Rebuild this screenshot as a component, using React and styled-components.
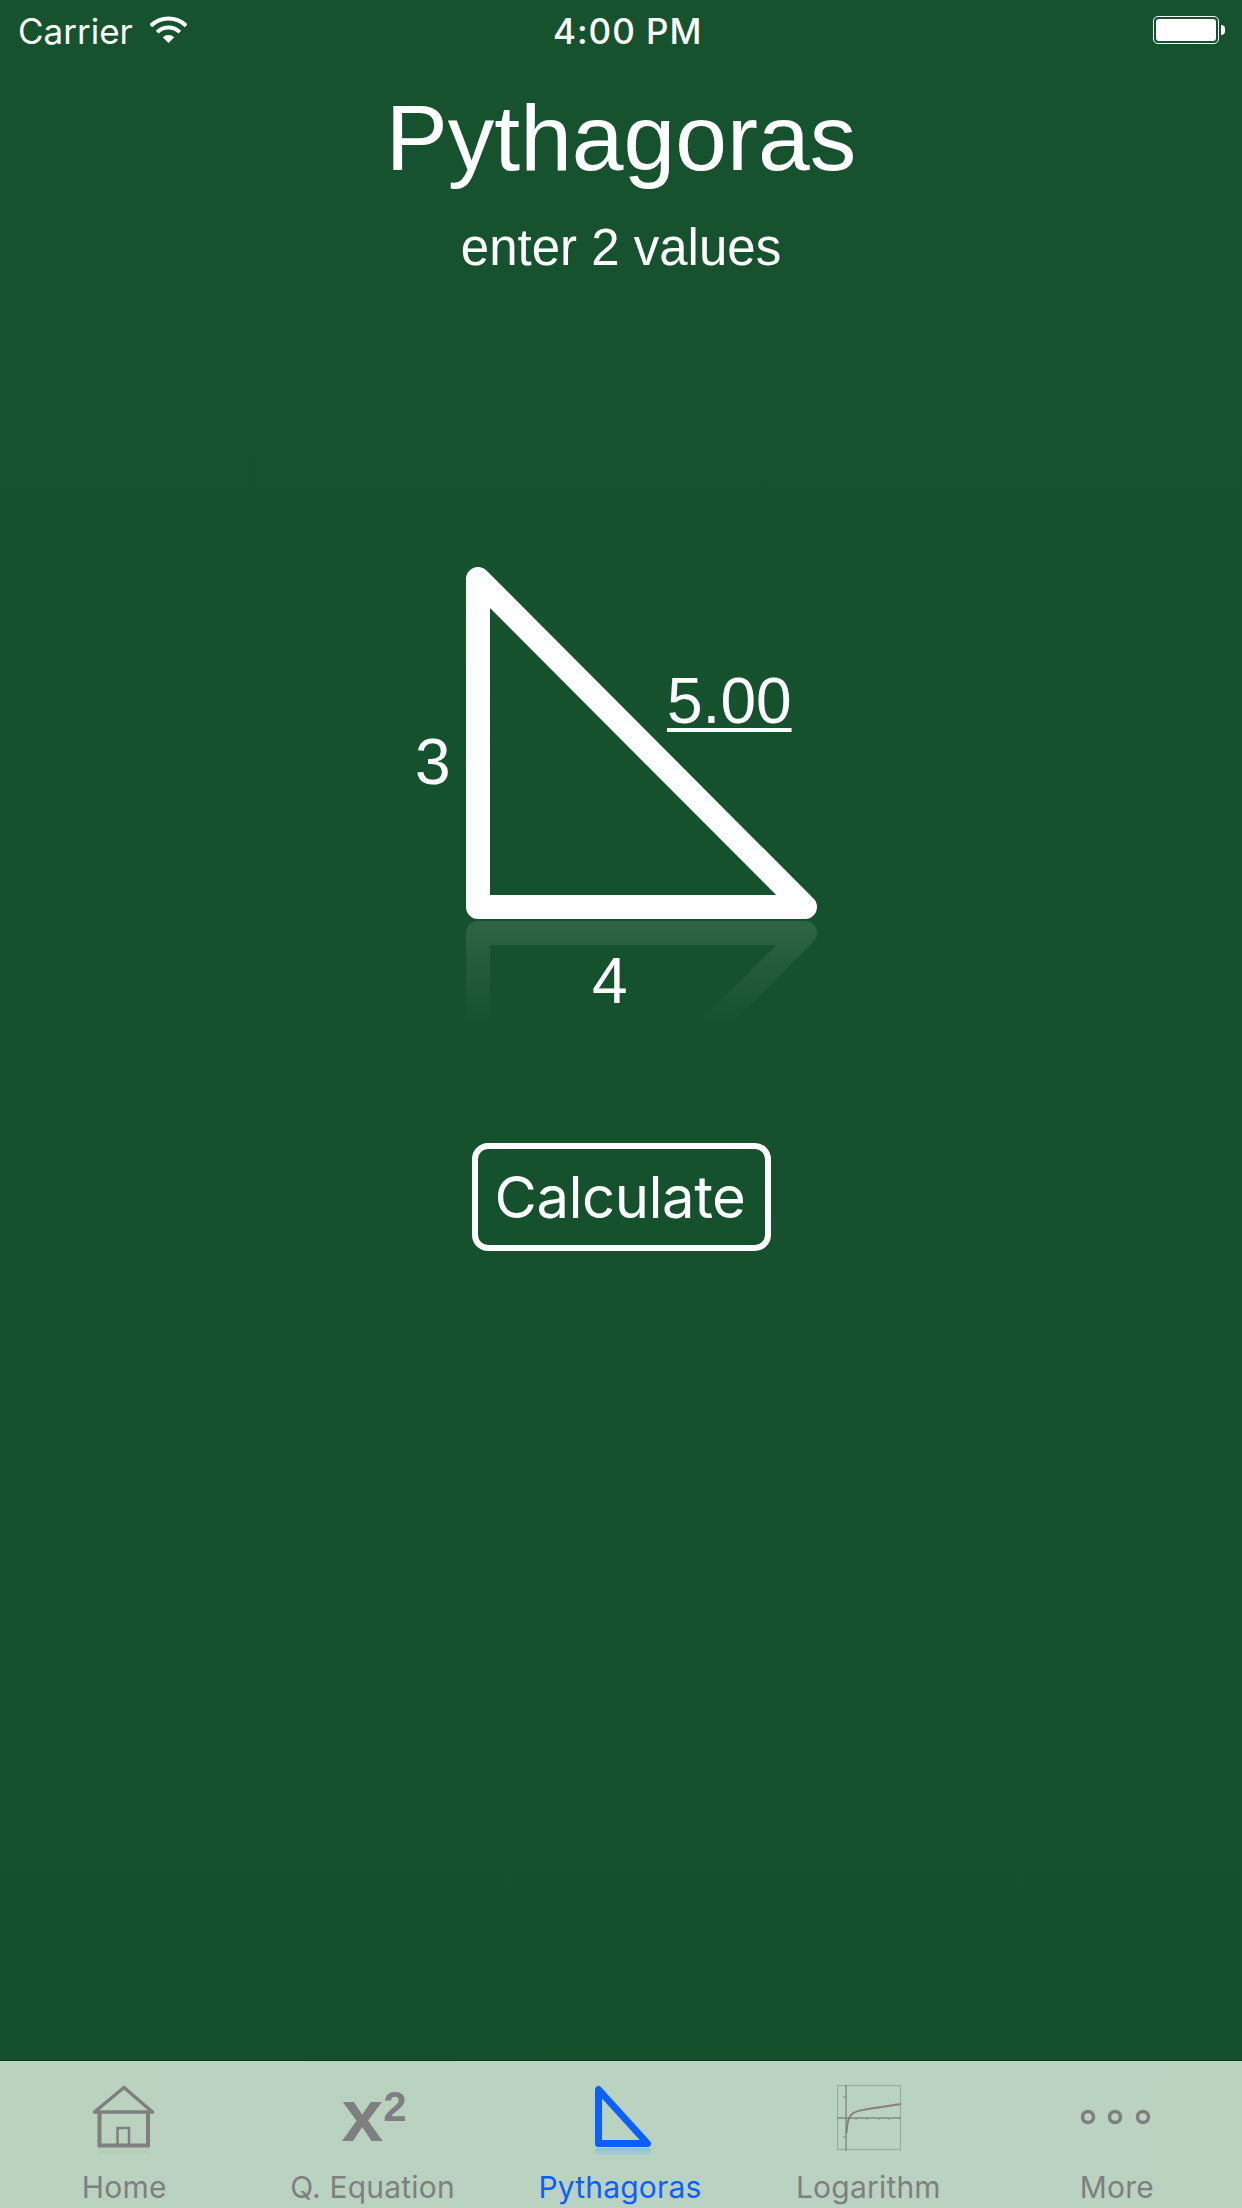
import React from 'react'
import styled, { createGlobalStyle } from 'styled-components'

const GlobalStyle = createGlobalStyle`
	html, body {
		margin: 0;
		padding: 0;
		background: #16512e;
	}
	* {
		box-sizing: border-box;
	}
`

const Page = styled.div`
	display: flex;
	flex-direction: column;
	width: 1242px;
	height: 2208px;
	overflow: hidden;
	background: linear-gradient(180deg, #16522e 0%, #14502c 100%);
	color: #fff;
	font-family: 'Liberation Sans', Arial, sans-serif;
`

const StatusBar = styled.div`
	display: grid;
	grid-template-columns: 535px auto 1fr;
	align-items: center;
	height: 60px;
	padding: 2px 17px 0 18px;
	font-family: Inter, 'Noto Sans', sans-serif;
	font-size: 35px;
	line-height: 58px;
`
const Carrier = styled.div`
	display: flex;
	align-items: center;
	gap: 17px;
	svg {
		margin-top: -3px;
	}
`
const Clock = styled.div`
	font-weight: 500;
	letter-spacing: 1px;
`
const Battery = styled.div`
	justify-self: end;
	display: flex;
	align-items: center;
	gap: 2px;
	margin-top: -2px;
`
const BatteryBody = styled.div`
	width: 66px;
	height: 28px;
	padding: 2px;
	border: 1px solid #fff;
	border-radius: 5px;
	&::after {
		content: '';
		display: block;
		height: 100%;
		background: #fff;
		border-radius: 3px;
	}
`
const BatteryCap = styled.div`
	width: 4px;
	height: 10px;
	background: #fff;
	border-radius: 0 5px 5px 0;
`

const Main = styled.main`
	flex: 1;
	display: flex;
	flex-direction: column;
	align-items: center;
`
const Title = styled.h1`
	margin: 32px 0 0;
	font-size: 93px;
	font-weight: 400;
	line-height: 93px;
`
const Subtitle = styled.div`
	margin-top: 37px;
	font-size: 51px;
	line-height: 51px;
`
const Figure = styled.div`
	position: relative;
	width: 392px;
	height: 456px;
	margin-top: 294px;
	svg {
		display: block;
	}
`
const SideValue = styled.div`
	position: absolute;
	left: ${(p) => p.$left}px;
	top: ${(p) => p.$top}px;
	font-size: 64px;
	line-height: 64px;
	text-decoration: ${(p) => (p.$underline ? 'underline' : 'none')};
	text-decoration-thickness: 4px;
	text-underline-offset: 5px;
`
const CalculateButton = styled.button`
	width: 299px;
	height: 108px;
	margin-top: 120px;
	padding: 0 2px 0 0;
	background: transparent;
	border: 6px solid #fff;
	border-radius: 16px;
	color: #fff;
	font-family: Inter, 'Noto Sans', sans-serif;
	font-size: 58px;
	font-weight: 400;
	line-height: 92px;
	letter-spacing: -0.5px;
`

const TabBar = styled.nav`
	display: grid;
	grid-template-columns: repeat(5, 1fr);
	height: 148px;
	padding-top: 24px;
	border-top: 1px solid #0e3a20;
	background: linear-gradient(100deg, #b9d3bf 0%, #bad2c1 60%, #bad3bf 100%);
`
const Tab = styled.div`
	display: flex;
	flex-direction: column;
	align-items: center;
	color: ${(p) => (p.$active ? '#0a60ff' : '#7f7f7f')};
`
const TabIcon = styled.div`
	display: flex;
	justify-content: center;
	height: 70px;
	margin-left: ${(p) => p.$shift || 0}px;
	svg {
		display: block;
	}
`
const TabLabel = styled.div`
	margin-top: 17px;
	margin-left: ${(p) => p.$shift || 0}px;
	font-family: Inter, 'Noto Sans', sans-serif;
	font-size: 30px;
	line-height: 30px;
	letter-spacing: 0.2px;
	white-space: nowrap;
`
const PowerBase = styled.span`
	margin-top: -7px;
	font-family: 'Liberation Sans', Arial, sans-serif;
	font-size: 75px;
	font-weight: 700;
	line-height: 75px;
`
const PowerExp = styled.span`
	margin-top: 1px;
	font-family: 'Liberation Sans', Arial, sans-serif;
	font-size: 42px;
	font-weight: 700;
	line-height: 42px;
`

const WifiIcon = () => (
	<svg width="37" height="27" viewBox="0 0 37 27" fill="none" stroke="#fff" strokeWidth="4">
		<path d="M0.8 9.8 A25 25 0 0 1 36.2 9.8" />
		<path d="M7.2 16.2 A16 16 0 0 1 29.8 16.2" />
		<path d="M12.8 21.3 A8 8 0 0 1 24.2 21.3 L18.5 27 Z" fill="#fff" stroke="none" />
	</svg>
)

const TriangleFigure = () => (
	<svg width="392" height="456" viewBox="0 0 392 456" fill="none">
		<defs>
			<linearGradient id="fade" x1="0" y1="353" x2="0" y2="456" gradientUnits="userSpaceOnUse">
				<stop offset="0" stopColor="#fff" stopOpacity="0.11" />
				<stop offset="1" stopColor="#fff" stopOpacity="0" />
			</linearGradient>
			<clipPath id="below">
				<rect x="0" y="353" width="392" height="103" />
			</clipPath>
		</defs>
		<path
			d="M53 12 L53 340 L380 340 Z"
			stroke="#fff"
			strokeWidth="24"
			strokeLinejoin="round"
		/>
		<g clipPath="url(#below)">
			<path
				d="M53 694 L53 366 L380 366 Z"
				stroke="url(#fade)"
				strokeWidth="24"
				strokeLinejoin="round"
			/>
		</g>
	</svg>
)

const HomeIcon = () => (
	<svg width="61" height="70" viewBox="0 0 61 70" fill="none" stroke="currentColor">
		<path d="M1.5 27 L31 2.5 L59.5 27 Z" strokeWidth="3.5" strokeLinejoin="round" />
		<path d="M6.5 27 V60.5 H55 V27" strokeWidth="4" />
		<path d="M24.5 60 V43 H36 V60" strokeWidth="2.5" />
		<rect x="5" y="63" width="52" height="6" fill="currentColor" stroke="none" opacity="0.06" />
	</svg>
)

const PowerIcon = () => (
	<>
		<PowerBase>x</PowerBase>
		<PowerExp>2</PowerExp>
	</>
)

const TriangleIcon = () => (
	<svg width="56" height="70" viewBox="0 0 56 70" fill="none">
		<defs>
			<linearGradient id="iconFade" x1="0" y1="0" x2="0" y2="1">
				<stop offset="0" stopColor="#8fc0d4" />
				<stop offset="1" stopColor="#a9cfd0" />
			</linearGradient>
		</defs>
		<path d="M3.5 4.5 V58.5 H52.5 Z" stroke="currentColor" strokeWidth="7" strokeLinejoin="round" />
		<rect x="0" y="63" width="56" height="7" rx="3" fill="url(#iconFade)" />
	</svg>
)

const LogIcon = () => (
	<svg width="64" height="70" viewBox="0 0 64 70" fill="none">
		<rect x="0.5" y="0.5" width="63" height="64" stroke="#9aa89d" strokeWidth="1.2" />
		<path d="M9 0 V66" stroke="#7f8a82" strokeWidth="1.4" />
		<path d="M0 33 H64" stroke="#7f8a82" strokeWidth="1.4" />
		<path
			d="M19 33 v2 M30 33 v2 M42 33 v2 M52 33 v2 M9 12 h-3 M9 52 h-3"
			stroke="#7f8a82"
			strokeWidth="1"
		/>
		<path d="M9.5 48 C10 38 11 32 15 29 C20 25 30 24 64 19" stroke="#85807f" strokeWidth="2" />
	</svg>
)

const MoreIcon = () => (
	<svg width="74" height="70" viewBox="0 0 74 70" fill="none" stroke="#807d7d" strokeWidth="3.5">
		<circle cx="7" cy="32" r="5.5" />
		<circle cx="34" cy="32" r="5.5" />
		<circle cx="62" cy="32" r="5.5" />
	</svg>
)

const tabs = [
	{ label: 'Home', icon: <HomeIcon />, iconShift: -1 },
	{ label: 'Q. Equation', icon: <PowerIcon />, iconShift: 3 },
	{ label: 'Pythagoras', icon: <TriangleIcon />, iconShift: 4, labelShift: -2, active: true },
	{ label: 'Logarithm', icon: <LogIcon />, labelShift: -2 },
	{ label: 'More', icon: <MoreIcon />, labelShift: -2 },
]

const App = () => {
	return (
		<Page>
			<GlobalStyle />
			<StatusBar>
				<Carrier>
					Carrier
					<WifiIcon />
				</Carrier>
				<Clock>4:00 PM</Clock>
				<Battery>
					<BatteryBody />
					<BatteryCap />
				</Battery>
			</StatusBar>
			<Main>
				<Title>Pythagoras</Title>
				<Subtitle>enter 2 values</Subtitle>
				<Figure>
					<TriangleFigure />
					<SideValue $left={-10} $top={163}>3</SideValue>
					<SideValue $left={242} $top={102} $underline>5.00</SideValue>
					<SideValue $left={167} $top={382}>4</SideValue>
				</Figure>
				<CalculateButton>Calculate</CalculateButton>
			</Main>
			<TabBar>
				{tabs.map((tab) => (
					<Tab key={tab.label} $active={tab.active}>
						<TabIcon $shift={tab.iconShift}>{tab.icon}</TabIcon>
						<TabLabel $shift={tab.labelShift}>{tab.label}</TabLabel>
					</Tab>
				))}
			</TabBar>
		</Page>
	)
}

export default App
